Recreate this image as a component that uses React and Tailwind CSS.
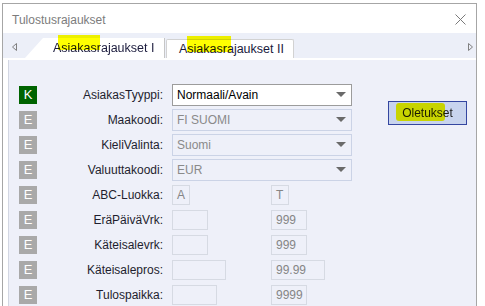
import React from "react";

const font = { fontFamily: '"Liberation Sans", Arial, sans-serif' };

function Badge({ letter }) {
  const bg = letter === "K" ? "bg-[#006400]" : "bg-[#a9a9a9]";
  return (
    <div
      className={`w-[18px] h-[18px] shrink-0 ${bg} text-white text-[13px] flex items-center justify-center leading-none`}
    >
      {letter}
    </div>
  );
}

function Label({ children }) {
  return (
    <div className="w-[127px] shrink-0 text-right pr-[1px] text-[12px] text-[#1e1e2e] leading-none">
      {children}
    </div>
  );
}

function Arrow() {
  return (
    <svg width="10" height="6" viewBox="0 0 10 6" className="shrink-0">
      <path d="M0 0 L10 0 L5 5 Z" fill="#6a6a6a" />
    </svg>
  );
}

function SelectBox({ value, active }) {
  return (
    <div
      className={`ml-[8px] w-[180px] h-[22px] flex items-center justify-between pl-[4px] pr-[5px] text-[12px] leading-none ${
        active
          ? "bg-white border border-[#9c9c9c] text-black"
          : "bg-[#eef0f9] border border-[#cbd3e6] text-[#8a8a8a]"
      }`}
    >
      <span>{value}</span>
      <Arrow />
    </div>
  );
}

function SmallInput({ value, w }) {
  return (
    <div
      className={`${w} h-[20px] border border-[#d6dae3] bg-[#eef0f9] text-[12px] text-[#858585] leading-none flex items-center pl-[4px]`}
    >
      {value}
    </div>
  );
}

const selects = [
  { badge: "K", label: "AsiakasTyyppi:", value: "Normaali/Avain", active: true },
  { badge: "E", label: "Maakoodi:", value: "FI SUOMI" },
  { badge: "E", label: "KieliValinta:", value: "Suomi" },
  { badge: "E", label: "Valuuttakoodi:", value: "EUR" },
];

const pairs = [
  { label: "ABC-Luokka:", a: "A", aw: "w-[18px]", b: "T", bw: "w-[18px]" },
  { label: "EräPäiväVrk:", a: "", aw: "w-[36px]", b: "999", bw: "w-[36px]" },
  { label: "Käteisalevrk:", a: "", aw: "w-[36px]", b: "999", bw: "w-[36px]" },
  { label: "Käteisalepros:", a: "", aw: "w-[54px]", b: "99.99", bw: "w-[54px]" },
  { label: "Tulospaikka:", a: "", aw: "w-[45px]", b: "9999", bw: "w-[36px]" },
];

export default function App() {
  return (
    <div
      className="w-[485px] h-[306px] bg-white overflow-hidden pl-[2px] pt-[3px] pr-[8px]"
      style={font}
    >
      <div className="h-[310px] border-l border-t border-r border-[#a6a6a6] flex flex-col">
        {/* title bar */}
        <div className="h-[29px] shrink-0 bg-white flex items-center justify-between pl-[9px] pr-[10px]">
          <span className="text-[12px] text-[#7c7c7c] pt-[2px]">Tulostusrajaukset</span>
          <svg width="11" height="11" viewBox="0 0 11 11" className="mt-[2px]">
            <path d="M0.5 0.5 L10.5 10.5 M10.5 0.5 L0.5 10.5" stroke="#7a7a7a" strokeWidth="1" />
          </svg>
        </div>

        {/* tab strip */}
        <div className="h-[25px] shrink-0 bg-[#eceff8] flex items-end relative isolate">
          <div className="w-[22px] h-full flex items-center pl-[9px] pt-[2px]">
            <svg width="5" height="8" viewBox="0 0 5 8">
              <path d="M4.5 0.5 L0.5 4 L4.5 7.5 Z" fill="#eceff8" stroke="#808080" strokeWidth="1" />
            </svg>
          </div>
          <div className="relative w-[140px] h-[20px]">
            <div
              className="absolute inset-0 bg-white border-r border-[#c6c6c6]"
              style={{ clipPath: "polygon(18px 0, 100% 0, 100% 100%, 0 100%)" }}
            />
            <div className="relative h-full flex items-center pl-[28px] pt-[1px] text-[12.5px] text-[#1a1a3c] leading-none">
              Asiakasrajaukset I
            </div>
            <div className="absolute left-[33px] top-[-3px] w-[42px] h-[15px] bg-[#ffff00] mix-blend-multiply" />
          </div>
          <div className="relative ml-[1px] w-[128px] h-[19px] bg-white border border-b-0 border-[#d2d2d2] rounded-t-[2px]">
            <div className="h-full flex items-center pl-[12px] pt-[1px] text-[12.5px] text-[#1a1a3c] leading-none">
              Asiakasrajaukset II
            </div>
            <div className="absolute left-[20px] top-[-4px] w-[44px] h-[16px] bg-[#ffff00] mix-blend-multiply" />
          </div>
          <div className="flex-1" />
          <div className="w-[8px] h-full flex items-center pt-[3px]">
            <svg width="5" height="8" viewBox="0 0 5 8">
              <path d="M0.5 0.5 L4.5 4 L0.5 7.5 Z" fill="#eceff8" stroke="#808080" strokeWidth="1" />
            </svg>
          </div>
        </div>

        <div className="h-[2px] shrink-0 bg-white" />

        {/* panel */}
        <div className="flex-1 ml-[5px] border-l border-[#d2d6e2] bg-[#eef0f9] flex pt-[22px] pl-[10px]">
          <div className="flex flex-col w-[333px]">
            {selects.map((s) => (
              <div key={s.label} className="h-[25px] flex items-center">
                <Badge letter={s.badge} />
                <Label>{s.label}</Label>
                <SelectBox value={s.value} active={s.active} />
              </div>
            ))}
            {pairs.map((p) => (
              <div key={p.label} className="h-[25px] flex items-center">
                <Badge letter="E" />
                <Label>{p.label}</Label>
                <div className="ml-[8px] w-[99px] flex">
                  <SmallInput value={p.a} w={p.aw} />
                </div>
                <SmallInput value={p.b} w={p.bw} />
              </div>
            ))}
          </div>
          <div className="ml-[36px] pt-[19px] isolate">
            <div className="relative w-[79px] h-[24px] bg-[#c8d4ee] border border-[#3446a0] flex items-center justify-center text-[12px] text-[#1a1a1a] leading-none">
              Oletukset
              <div className="absolute left-[7px] top-[1px] w-[49px] h-[18px] bg-[#ffff00] mix-blend-multiply rounded-[3px]" />
            </div>
          </div>
        </div>
      </div>
    </div>
  );
}
